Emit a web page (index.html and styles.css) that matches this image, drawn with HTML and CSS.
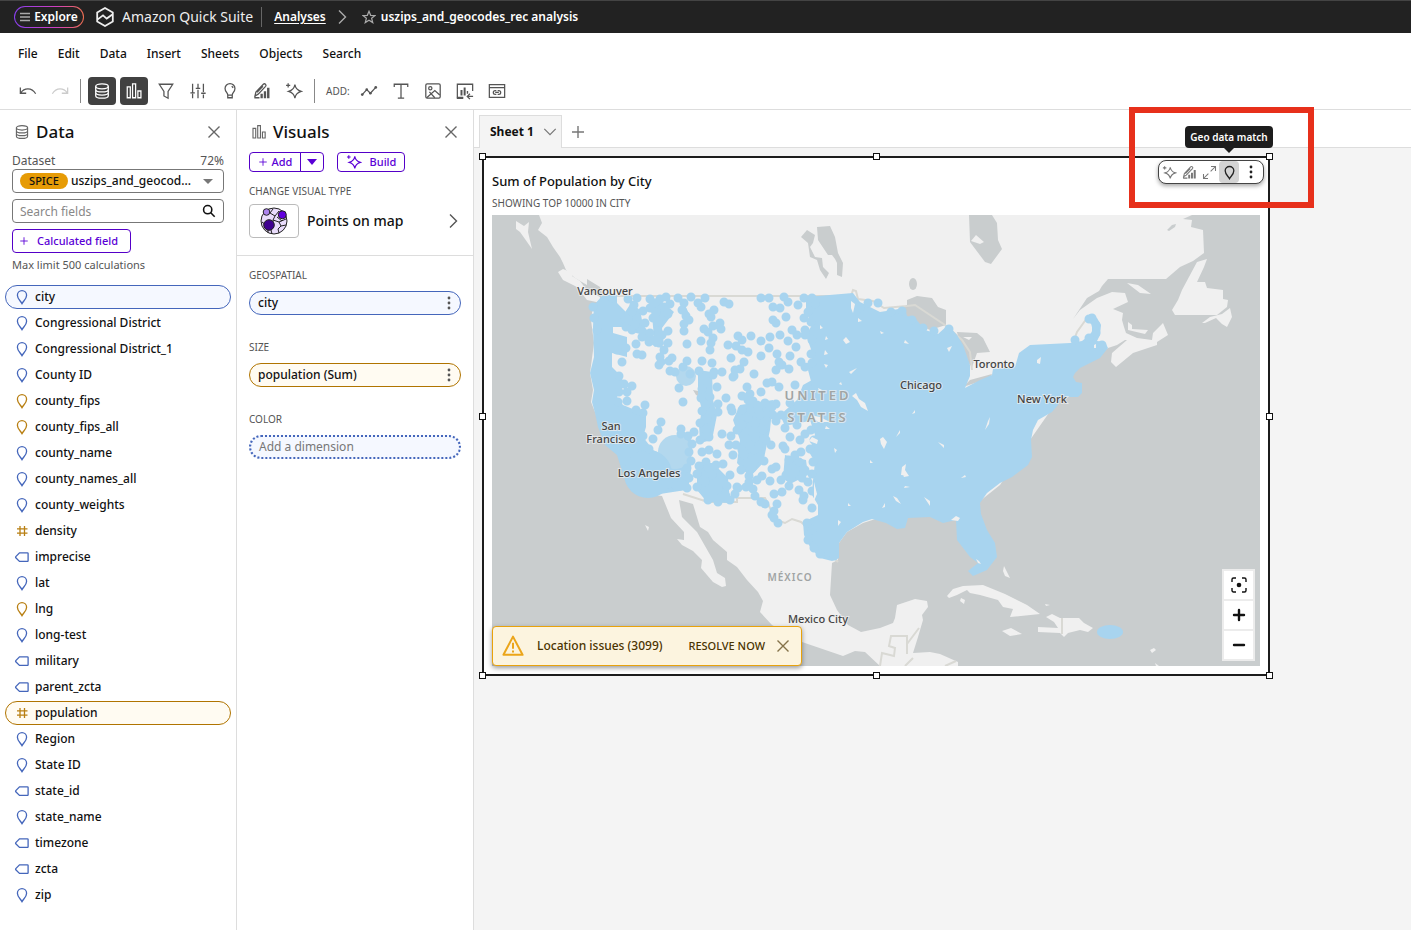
FILE: index.html
```html
<!DOCTYPE html>
<html lang="en">
<head>
<meta charset="utf-8">
<meta name="viewport" content="width=device-width, initial-scale=1">
<title>uszips_and_geocodes_rec analysis</title>
<link rel="stylesheet" href="styles.css">
</head>
<body>
<svg class="sprite" aria-hidden="true">
  <symbol id="pin" viewBox="0 0 16 16"><path d="M8 14.6C6.6 11.9 3.4 10 3.4 6.2a4.6 4.6 0 0 1 9.2 0c0 3.8-3.2 5.7-4.6 8.4z"/></symbol>
  <symbol id="tag" viewBox="0 0 16 16"><path d="M5.5 3.8h8a.6.6 0 0 1 .6.6v7.4a.6.6 0 0 1-.6.6h-8L1.8 8.8a1 1 0 0 1 0-1.2z"/></symbol>
  <symbol id="hash" viewBox="0 0 16 16"><path d="M6 3v10M10.5 3v10M3 5.8h10.5M3 10.2h10.5"/></symbol>
  <symbol id="close" viewBox="0 0 16 16"><path d="M2.5 2.5l11 11M13.5 2.5l-11 11"/></symbol>
  <symbol id="plus" viewBox="0 0 16 16"><path d="M8 2v12M2 8h12"/></symbol>
  <symbol id="db" viewBox="0 0 20 20"><ellipse cx="10" cy="4.8" rx="7" ry="2.8"/><path d="M3 4.8v10.4c0 1.6 3.1 2.8 7 2.8s7-1.2 7-2.8V4.8M3 8.3c0 1.6 3.1 2.8 7 2.8s7-1.2 7-2.8M3 11.8c0 1.6 3.1 2.8 7 2.8s7-1.2 7-2.8"/></symbol>
  <symbol id="bars" viewBox="0 0 20 20"><path d="M2.5 5.5h3.4v12H2.5zM8.4 2h3.4v15.500H8.400zM14.300 10h3.400v7.500h-3.400z"/></symbol>
  <symbol id="chartpen" viewBox="0 0 20 20"><path d="M2.200 15.500l1-4.300 8.300-8.700a1.700 1.700 0 0 1 2.500 2.300l-8.300 8.700zM2.200 15.500v2h5M4.500 11.500l6.500-6.800"/><path class="solid" d="M8.300 13h2.600v5H8.300zM12 10.200h2.600V18H12zM15.600 6.500h2.700V18h-2.700z"/></symbol>
  <symbol id="spark" viewBox="0 0 20 20"><path d="M11 3c.6 4 2.600 6.200 7 7.500-4.400 1.300-6.400 3.500-7 7.500-.6-4-2.600-6.200-7-7.500 4.400-1.300 6.400-3.500 7-7.500zM3.500 1.500v4.500M1.200 3.800h4.600"/></symbol>
  <symbol id="dots" viewBox="0 0 16 16"><g class="solid"><circle cx="8" cy="3" r="1.400"/><circle cx="8" cy="8" r="1.400"/><circle cx="8" cy="13" r="1.400"/></g></symbol>
  <symbol id="chev" viewBox="0 0 16 16"><path d="M5 1.500L11.500 8 5 14.500"/></symbol>
</svg>

<header class="topbar">
  <button class="explore"><svg class="ic10" viewBox="0 0 10 10"><path d="M0 1.500h10M0 5h10M0 8.500h10"/></svg>Explore</button>
  <a class="brand" href="#"><svg viewBox="0 0 20 20"><path d="M10 1l7.800 4.500v9L10 19l-7.800-4.500v-9zM2.400 12.600l5.600-4.300 3.700 3.300 6-4.400"/></svg>Amazon Quick Suite</a>
  <nav class="crumbs" aria-label="Breadcrumb">
    <a href="#">Analyses</a>
    <svg class="ic16 crumb-sep"><use href="#chev"/></svg>
    <button class="star" aria-label="Favorite"><svg viewBox="0 0 16 16"><path d="M8 1.500l1.900 4.600 4.900.3-3.800 3.100 1.300 4.900L8 11.700l-4.300 2.700L5 9.500 1.200 6.400l4.900-.3z"/></svg></button>
    <h1>uszips_and_geocodes_rec analysis</h1>
  </nav>
</header>

<nav class="menus" aria-label="Main menu">
  <button>File</button><button>Edit</button><button>Data</button><button>Insert</button><button>Sheets</button><button>Objects</button><button>Search</button>
</nav>

<div class="tools" role="toolbar" aria-label="Tools">
  <button aria-label="Undo"><svg viewBox="0 0 20 20"><path d="M1.500 6v6.500H8M2 12c3.500-5.500 12-6.500 16.500 1"/></svg></button>
  <button class="faint" aria-label="Redo"><svg viewBox="0 0 20 20"><path d="M18.500 6v6.500H12M18 12C14.500 6.500 6 5.500 1.500 13"/></svg></button>
  <span class="rule"></span>
  <button class="on" aria-label="Data"><svg><use href="#db"/></svg></button>
  <button class="on" aria-label="Visuals"><svg><use href="#bars"/></svg></button>
  <button aria-label="Filter"><svg viewBox="0 0 20 20"><path d="M2.500 2.500h15l-5.200 8v7.500l-4.600-2.500v-5z"/></svg></button>
  <button aria-label="Parameters"><svg viewBox="0 0 20 20"><path d="M4 2v8M4 13v5M10 2v3.500M10 8.500V18M16 2v9M16 14v4M1.500 12h5M7.500 7h5M13.500 12.500h5M4 10v2M10 5.500V7"/></svg></button>
  <button aria-label="Insights"><svg viewBox="0 0 20 20"><path d="M7.500 14.500C7.500 12 4.500 11 4.500 7.300a5.500 5.500 0 0 1 11 0c0 3.700-3 4.700-3 7.200zM7.500 14.500v3h5v-3M12 4.500l1.500 2"/></svg></button>
  <button aria-label="Themes"><svg><use href="#chartpen"/></svg></button>
  <button aria-label="Build with AI"><svg><use href="#spark"/></svg></button>
  <span class="rule"></span>
  <span class="tools-label">ADD:</span>
  <button aria-label="Add visual"><svg viewBox="0 0 20 20"><path d="M2.500 14l5-5.500 4 4L17.500 6"/><g class="solid"><circle cx="2.500" cy="14" r="1.500"/><circle cx="7.500" cy="8.500" r="1.500"/><circle cx="11.500" cy="12.500" r="1.500"/><circle cx="17.500" cy="6" r="1.500"/></g></svg></button>
  <button aria-label="Add text"><svg viewBox="0 0 20 20"><path d="M2.500 5.500v-3h15v3M10 2.500V18M6.500 18h7"/></svg></button>
  <button aria-label="Add image"><svg viewBox="0 0 20 20"><rect x="2" y="2" width="16" height="16" rx="1.500"/><circle cx="7" cy="7" r="1.800"/><path d="M3 17.500l9-8 5.500 5M6 11l6 6.500"/></svg></button>
  <button aria-label="Add chart reference"><svg viewBox="0 0 20 20"><path d="M8 17.500H1.500V2.500h17V10M19 16h-6M15.500 13l-3 3 3 3"/><path class="solid" d="M5 9h2.200v6H5zM8.500 6h2.200v9H8.500zM12 10h1.500v3H12zM1 16.500h7V19H1z"/></svg></button>
  <button aria-label="Add web content"><svg viewBox="0 0 20 20"><path d="M1.500 3h17v14h-17zM1.500 6.200h17M9.300 9.500H8a2 2 0 0 0 0 4.200h1.300M10.700 9.500H12a2 2 0 0 1 0 4.200h-1.300M8 11.600h4"/></svg></button>
</div>

<main class="work">
  <section class="panel" aria-labelledby="data-h">
    <div class="panel-head"><svg class="ic16"><use href="#db"/></svg><h2 id="data-h">Data</h2><button class="x" aria-label="Close data panel"><svg class="ic16"><use href="#close"/></svg></button></div>
    <div class="controls">
      <div class="label-row"><label for="ds">Dataset</label><span>72%</span></div>
      <div class="select-box"><span class="spice">SPICE</span><select id="ds"><option>uszips_and_geocod...</option></select></div>
      <div class="search-box"><input id="q" type="text" placeholder="Search fields" aria-label="Search fields"><svg viewBox="0 0 16 16"><circle cx="6.500" cy="6.500" r="4.700"/><path d="M10 10l4.500 4.500"/></svg></div>
      <button class="btn calc"><svg class="ic10"><use href="#plus"/></svg>Calculated field</button>
      <p class="hint">Max limit 500 calculations</p>
    </div>
    <ul class="fields">
      <li><button class="blue sel"><svg><use href="#pin"/></svg>city</button></li>
      <li><button class="blue"><svg><use href="#pin"/></svg>Congressional District</button></li>
      <li><button class="blue"><svg><use href="#pin"/></svg>Congressional District_1</button></li>
      <li><button class="blue"><svg><use href="#pin"/></svg>County ID</button></li>
      <li><button class="gold"><svg><use href="#pin"/></svg>county_fips</button></li>
      <li><button class="gold"><svg><use href="#pin"/></svg>county_fips_all</button></li>
      <li><button class="blue"><svg><use href="#pin"/></svg>county_name</button></li>
      <li><button class="blue"><svg><use href="#pin"/></svg>county_names_all</button></li>
      <li><button class="blue"><svg><use href="#pin"/></svg>county_weights</button></li>
      <li><button class="gold"><svg><use href="#hash"/></svg>density</button></li>
      <li><button class="blue"><svg><use href="#tag"/></svg>imprecise</button></li>
      <li><button class="blue"><svg><use href="#pin"/></svg>lat</button></li>
      <li><button class="gold"><svg><use href="#pin"/></svg>lng</button></li>
      <li><button class="blue"><svg><use href="#pin"/></svg>long-test</button></li>
      <li><button class="blue"><svg><use href="#tag"/></svg>military</button></li>
      <li><button class="blue"><svg><use href="#tag"/></svg>parent_zcta</button></li>
      <li><button class="gold sel"><svg><use href="#hash"/></svg>population</button></li>
      <li><button class="blue"><svg><use href="#pin"/></svg>Region</button></li>
      <li><button class="blue"><svg><use href="#pin"/></svg>State ID</button></li>
      <li><button class="blue"><svg><use href="#tag"/></svg>state_id</button></li>
      <li><button class="blue"><svg><use href="#pin"/></svg>state_name</button></li>
      <li><button class="blue"><svg><use href="#tag"/></svg>timezone</button></li>
      <li><button class="blue"><svg><use href="#tag"/></svg>zcta</button></li>
      <li><button class="blue"><svg><use href="#pin"/></svg>zip</button></li>
    </ul>
  </section>

  <section class="panel" aria-labelledby="vis-h">
    <div class="panel-head"><svg class="ic16"><use href="#bars"/></svg><h2 id="vis-h">Visuals</h2><button class="x" aria-label="Close visuals panel"><svg class="ic16"><use href="#close"/></svg></button></div>
    <div class="vis-top">
      <div class="btn-row">
        <div class="split"><button class="btn"><svg class="ic10"><use href="#plus"/></svg>Add</button><button class="btn" aria-label="More add options"><span class="caret"></span></button></div>
        <button class="btn build"><svg class="ic16"><use href="#spark"/></svg>Build</button>
      </div>
      <h3>CHANGE VISUAL TYPE</h3>
      <button class="vtype">
        <span class="thumb"><svg viewBox="0 0 28 28"><circle class="globe" cx="14" cy="14" r="13"/><path d="M6 4l4 2 3-4M10 6l5 3 4-5M15 9l-2 4 6 2 7-3M19 15l2 4 5-1M21 19l-3 3 1 4M9 14l5 0M2 15l4 3M14 20l-3 3 1 4M17 10l5 4M4 20l4 3 0 3"/><circle class="p1" cx="6.500" cy="5" r="3.300"/><circle class="p2" cx="22.300" cy="7.800" r="4"/><circle class="p3" cx="9" cy="18" r="5.300"/></svg></span>
        <span class="vname">Points on map</span><svg class="ic16"><use href="#chev"/></svg>
      </button>
    </div>
    <div class="wells">
      <div class="well"><h3>GEOSPATIAL</h3><button class="pill blue">city<svg class="ic16"><use href="#dots"/></svg></button></div>
      <div class="well"><h3>SIZE</h3><button class="pill gold">population (Sum)<svg class="ic16"><use href="#dots"/></svg></button></div>
      <div class="well"><h3>COLOR</h3><button class="pill empty">Add a dimension</button></div>
    </div>
  </section>

  <section class="canvas" aria-label="Sheet">
    <div class="tabs"><button class="tab">Sheet 1<svg viewBox="0 0 16 16"><path d="M1.500 4.500L8 11l6.500-6.500"/></svg></button><button class="newtab" aria-label="Add sheet"><svg class="ic16"><use href="#plus"/></svg></button></div>
    <article class="card">
      <h2>Sum of Population by City</h2>
      <p>SHOWING TOP 10000 IN CITY</p>
      <div class="map">
        <svg viewBox="492 215 768 451" role="img" aria-label="Map of population by city">
          <path class="land" d="M539 215L542 223 538 230 547 237 553 247 560 257 563 263 566 270 575 278 587 285 587 279 600 287 604 296 600 303 593 306 591 320 594 343 590 373 593 390 591 402 597 417 605 443 617 453 625 473 637 493 662 496 671 518 684 532 684 540 677 539 682 545 693 551 702 560 701 568 713 582 722 587 726 586 725 578 717 573 713 560 697 532 682 517 679 500 693 504 700 527 708 532 713 540 727 552 727 560 737 567 747 580 758 592 763 601 760 612 772 625 802 642 843 656 855 651 865 652 880 666 958 666 958 662 940 654 930 652 913 653 918 637 923 620 922 615 928 607 927 601 915 599 897 605 895 618 893 623 880 628 861 632 848 625 837 610 830 595 832 563 838 560 839 543 847 532 863 523 888 515 943 515 975 505 1000 485 1030 440 1060 397 1075 370 1108 348 1117 345 1125 340 1127 340 1112 353 1111 362 1116 367 1133 353 1157 345 1157 342 1168 335 1163 323 1153 333 1152 340 1137 338 1126 333 1124 327 1122 320 1123 313 1113 309 1128 302 1125 293 1112 292 1097 298 1080 310 1073 319 1087 298 1099 291 1102 286 1108 279 1166 279 1180 267 1193 261 1204 253 1203 230 1191 227 1192 220 1183 219 1192 215z"/>
          <path class="land" d="M516 221L524 226 529 222 528 232 532 249 525 239 520 232 516 229zM558 272L563 269 573 273 572 276 580 281 586 289 600 297 601 303 587 300 577 287 563 280zM1207 259L1197 262 1182 290 1178 300 1172 310 1175 315 1217 315 1227 307 1228 300 1223 299 1223 290 1207 288 1205 282 1197 282 1204 267zM1202 323L1210 317 1222 314 1230 308 1232 317 1227 327 1222 324 1216 318 1205 323zM1127 283L1138 285 1151 294 1140 293zM1128 322L1132 325 1132 329 1148 330 1145 334 1128 330z"/>
          <path class="land" d="M947 596L953 589 963 586 983 585 1005 594 1027 605 1040 614 1010 617 1013 609 1003 607 998 600 980 595 970 593 967 590 957 595 949 598zM961 598l4 2-1 4-4-3zM1003 571l1-5 2 4 4 8-5-2zM1046 617L1052 614 1060 618 1079 618 1084 623 1093 628 1088 632 1080 630 1068 633 1064 637 1060 633 1038 632 1038 627 1058 628 1054 622zM1002 631L1011 628 1022 634 1010 636zM1150 650l4-2 2 2-4 3zM1155 663l4 3h-3zM645 525l4 2-1 4zM1045 604l5 1-4 1z"/>
          <path class="water" d="M817 227L830 226 835 237 838 253 843 263 842 277 837 275 837 263 835 259 832 255 828 255 818 240zM801 237L807 230 815 235 813 243 810 247 815 257 822 258 823 267 829 273 826 279 820 270 817 260 810 257 808 243zM969 215L992 215 997 223 998 240 1002 249 991 264 985 262 970 242zM1167 230l5-5 4-1-1 3-6 4zM883 323L897 310 907 305 907 300 917 296 932 298 938 307 946 310 946 325 930 330 912 322 897 330zM943 333L930 343 928 353 926 360 933 350 940 344zM957 332L977 333 983 338 990 352 977 353 972 367 963 357zM963 387L970 380 992 374 990 378 975 383zM693 390l5 1v5l-2-1z"/>
          <ellipse class="water" cx="913" cy="284" rx="4" ry="6"/>
          <path class="land" d="M971 241l5-6 8 7-4 2zM963 337l9 0-3 3z"/>
          <path class="border" d="M601 296H851L853 290 856 291 858 299 873 301 884 308 907 306 915 305 945 325 962 340 970 352 972 370M1073 343L1077 332 1087 318M683 494L708 502H737V498H765L776 520 785 523 792 519 801 522 810 530 838 562M880 666L882 653 894 656 895 648 889 646 891 636H907V654M907 644L919 628M905 666L913 658M945 666L956 661M1062 618v16"/>
          <path class="data" d="M602 296L617 295 617 303 627 313 622 327 613 327 613 333 627 337 627 357 612 353 612 367 622 377 623 387 617 397 623 405 640 412 646 416 646 427 643 437 653 450 670 458 677 473 686 490 660 494 632 492 624 477 617 455 605 445 598 427 595 413 592 402 594 390 590 373 594 357 593 327 594 305z"/>
          <path class="data" d="M631 303L640 310 643 325 655 340 662 345 655 347 640 334 625 330 620 320zM648 298L666 305 674 312 662 328 664 345 654 338 652 315zM684 303L692 320 684 328zM698 370L712 372 713 400 717 415 712 440 700 443 699 425 702 410 698 395zM664 445L690 437 691 470 688 490 672 490zM697 463L713 463 728 478 730 503 707 502 697 490zM740 405L773 400 770 430 763 463 750 477 737 463 740 440 733 420zM785 455L806 460 808 475 790 484 783 478zM803 385L812 380 814 420 785 426 780 415 797 400z"/>
          <path class="data" d="M806 297L853 293 860 302 880 312 905 308 907 316 915 318 925 330 938 334 948 325 957 335 963 345 970 365 970 376 965 388 980 380 992 375 993 369 1015 367 1019 353 1030 345 1070 343 1082 341 1087 337 1092 332 1092 325 1087 320 1092 314 1097 318 1101 325 1100 335 1097 341 1105 342 1108 348 1100 358 1080 368 1075 373 1073 377 1076 382 1082 383 1082 393 1078 397 1060 397 1058 405 1052 412 1038 420 1033 430 1031 440 1032 457 1028 465 1012 477 1000 483 987 493 980 503 981 514 987 530 995 543 997 557 987 570 973 576 968 571 978 563 970 557 957 540 956 520 943 523 930 517 908 518 905 528 897 529 886 523 872 519 863 522 847 532 839 543 839 558 832 561 820 558 810 547 804 535 803 522 818 515 818 505 812 495 813 480 815 462 809 452 815 435 810 420 808 400 812 385 808 370 813 355 806 335 812 325 806 312z"/>
          <circle class="data soft" cx="675" cy="452" r="17"/><circle class="data" cx="648" cy="474" r="24"/><circle class="data soft" cx="686" cy="376" r="10"/>
          <path class="scatter" d="M593 307h0M594 318h0M597 330h0M612 298h0M626 348h0M622 362h0M617 350h0M628 299h0M637 298h0M634 305h0M632 312h0M643 311h0M628 320h0M635 325h0M626 327h0M632 330h0M645 323h0M650 299h0M655 303h0M660 299h0M666 297h0M650 308h0M656 313h0M664 307h0M670 304h0M668 314h0M658 322h0M653 318h0M650 333h0M662 335h0M668 331h0M678 298h0M684 303h0M691 297h0M698 303h0M705 298h0M682 310h0M686 316h0M689 320h0M684 324h0M684 331h0M701 307h0M709 314h0M714 310h0M711 317h0M720 323h0M713 326h0M704 329h0M708 332h0M721 329h0M724 302h0M729 304h0M642 337h0M649 342h0M655 340h0M636 344h0M659 343h0M668 343h0M664 350h0M637 354h0M642 355h0M660 357h0M672 358h0M659 365h0M669 361h0M687 344h0M701 341h0M711 343h0M713 338h0M710 350h0M687 361h0M702 361h0M712 363h0M683 367h0M675 372h0M670 371h0M661 362h0M690 374h0M699 371h0M714 372h0M722 372h0M717 387h0M713 375h0M679 388h0M683 402h0M619 376h0M624 384h0M632 386h0M627 392h0M627 401h0M619 392h0M618 402h0M645 405h0M661 422h0M658 430h0M681 429h0M653 439h0M643 436h0M649 449h0M643 413h0M636 410h0M681 434h0M688 436h0M694 432h0M700 423h0M702 411h0M701 398h0M702 389h0M710 397h0M706 405h0M718 404h0M726 398h0M731 408h0M718 412h0M707 419h0M706 430h0M709 437h0M722 434h0M692 444h0M700 440h0M689 452h0M691 461h0M702 452h0M717 454h0M709 450h0M687 468h0M689 478h0M680 486h0M687 488h0M676 486h0M668 484h0M662 480h0M699 466h0M706 462h0M697 474h0M708 468h0M716 465h0M723 464h0M730 475h0M712 475h0M705 482h0M722 482h0M718 489h0M726 496h0M713 496h0M708 500h0M730 500h0M718 502h0M735 494h0M738 488h0M697 487h0M720 498h0M727 486h0M738 336h0M736 346h0M728 345h0M735 370h0M733 377h0M742 340h0M751 336h0M742 350h0M748 352h0M731 358h0M744 362h0M734 376h0M740 369h0M754 374h0M747 387h0M742 396h0M750 394h0M761 392h0M732 411h0M742 410h0M748 418h0M757 405h0M765 403h0M772 407h0M761 298h0M769 298h0M784 297h0M788 302h0M773 307h0M780 308h0M773 320h0M776 323h0M786 317h0M798 305h0M804 298h0M812 298h0M808 312h0M804 318h0M811 322h0M805 330h0M761 341h0M770 337h0M780 335h0M792 330h0M788 341h0M797 335h0M805 335h0M812 340h0M796 347h0M811 354h0M761 356h0M769 348h0M777 354h0M779 362h0M790 356h0M782 365h0M789 369h0M776 370h0M801 362h0M805 367h0M812 363h0M767 383h0M772 382h0M779 387h0M795 385h0M776 404h0M773 415h0M776 421h0M760 415h0M755 424h0M763 430h0M766 440h0M752 432h0M742 425h0M737 430h0M731 436h0M736 445h0M742 450h0M733 455h0M729 445h0M748 400h0M753 401h0M758 410h0M750 446h0M755 438h0M754 450h0M755 460h0M747 463h0M741 470h0M749 476h0M737 487h0M744 455h0M758 448h0M760 457h0M752 468h0M764 461h0M771 445h0M757 480h0M762 476h0M770 481h0M749 482h0M753 489h0M746 487h0M755 496h0M761 502h0M765 504h0M772 469h0M776 467h0M785 449h0M790 437h0M783 446h0M789 460h0M795 455h0M801 452h0M810 449h0M799 462h0M805 470h0M795 472h0M786 475h0M781 480h0M774 494h0M782 492h0M791 478h0M789 486h0M802 478h0M799 490h0M808 482h0M804 496h0M812 474h0M812 491h0M812 508h0M777 504h0M774 511h0M774 518h0M778 523h0M772 515h0M803 500h0M813 462h0M814 440h0M805 434h0M800 440h0M811 430h0M797 425h0M785 428h0M793 413h0M803 408h0M790 403h0M812 417h0M781 415h0M807 523h0M812 530h0M808 540h0M814 548h0M820 554h0M834 556h0M815 304h0M807 395h0M868 303h0M860 308h0M878 303h0M891 312h0M902 311h0M912 320h0M923 328h0M934 331h0M949 329h0M1075 340h0M1089 319h0M1092 318h0M1096 325h0M1096 333h0M1089 338h0M1102 345h0"/>
          <ellipse class="data" cx="1110" cy="632" rx="13" ry="7"/>
          <path class="land" d="M843 340l3-3 4 5-4 2zM852 396l4-3 3 6 6 4 3 8-7-4-4-7zM880 439l3-2 4 5-3 7-3-5zM902 467l4-3-1 6 4 6-8-1zM893 496l4 2 4 6-5-3zM924 497l6 4 0 5zM947 348l5-2-3 6zM1037 360l4-3-1 7-3-1zM951 520l5-4 4 2-2 3zM812 437l6 3-1 4-8-3zM834 448l3 2-2 3zM851 301l4 3-2 9-2-5zM826 336l2 3-3 1zM938 442l6 3 0 3zM1094 345l2-1 0 4-2 0zM976 559l3 2 2 3-3-1zM814 482l3 12-3 7zM810 415l10 2 10 5-12 0zM824 364l4 1-2 3zM990 417l-1 7-4 6 3-9zM900 430l-4 7 4-4zM849 372l8-4-6 6zM838 520l3 2-3 4zM885 503l-3 5 3-1zM903 475l6 1-5 1zM905 486l5 1-6 1zM880 331l4 2-3 1zM905 340l4 4-5-1zM870 460l3 3-3 0zM848 503l3 3-3 0zM915 410l-3 4 3-1zM965 475l-4 3 5-1zM841 382l1 3-3-1zM858 318l4 3-4 1zM825 350l3 4-4 1zM820 325l3 3-3 1zM818 388l4 2-3 1zM826 426l4 3-5 0z"/>
          <g class="places">
            <text x="605" y="295">Vancouver</text><text x="611" y="430">San</text><text x="611" y="443">Francisco</text><text x="649" y="477">Los Angeles</text>
            <text x="921" y="389">Chicago</text><text x="994" y="368">Toronto</text><text x="1042" y="403">New York</text><text x="818" y="623">Mexico City</text>
          </g>
          <g class="country"><text x="818" y="400">UNITED</text><text x="818" y="422">STATES</text><text class="mx" x="790" y="581">MÉXICO</text></g>
        </svg>
        <div class="zoom"><button aria-label="Fit to data"><svg viewBox="0 0 16 16"><path d="M1 5V2.500A1.500 1.500 0 0 1 2.500 1H5M11 1h2.500A1.500 1.500 0 0 1 15 2.500V5M15 11v2.500a1.500 1.500 0 0 1-1.500 1.500H11M5 15H2.500A1.500 1.500 0 0 1 1 13.500V11"/><circle class="solid" cx="8" cy="8" r="2.300"/></svg></button><button aria-label="Zoom in"><svg class="thick" viewBox="0 0 16 16"><path d="M8 3v10M3 8h10"/></svg></button><button aria-label="Zoom out"><svg class="thick" viewBox="0 0 16 16"><path d="M3 8h10"/></svg></button></div>
        <div class="alert" role="status"><svg class="warn" viewBox="0 0 20 20"><path d="M10 1.500L18.700 18H1.300zM10 7v5.500M10 14v2"/></svg><span>Location issues (3099)</span><button class="resolve">RESOLVE NOW</button><button class="x" aria-label="Dismiss"><svg class="ic16"><use href="#close"/></svg></button></div>
      </div>
      <i class="h nw"></i><i class="h n"></i><i class="h ne"></i><i class="h w"></i><i class="h e"></i><i class="h sw"></i><i class="h s"></i><i class="h se"></i>
      <div class="floatbar" role="toolbar" aria-label="Visual actions">
        <button aria-label="Edit with AI"><svg><use href="#spark"/></svg></button><button aria-label="Format visual"><svg><use href="#chartpen"/></svg></button><button aria-label="Maximize"><svg viewBox="0 0 20 20"><path d="M12 2h6v6M18 2l-6.500 6.500M8 18H2v-6M2 18l6.500-6.500"/></svg></button><button class="active" aria-label="Geo data match" aria-describedby="tip"><svg class="ic16"><use href="#pin"/></svg><span class="tip" id="tip" role="tooltip">Geo data match</span></button><button class="more" aria-label="More"><svg class="ic16"><use href="#dots"/></svg></button>
      </div>
      <div class="callout"></div>
    </article>
  </section>
</main>
</body>
</html>
```

FILE: styles.css
```css
* { box-sizing: border-box; }
body { margin: 0; min-height: 100vh; display: flex; flex-direction: column; background: #fff; color: #111; font: 500 12px/16px "Noto Sans", "Open Sans", sans-serif; }
button, input, select { font: inherit; color: inherit; }
button { background: none; border: 0; padding: 0; display: inline-flex; align-items: center; justify-content: center; cursor: pointer; }
h1, h2, h3, p, ul { margin: 0; padding: 0; }
svg { fill: none; stroke: currentColor; stroke-width: 1.4; flex: none; }
.solid { fill: currentColor; stroke: none; }
.sprite { position: absolute; width: 0; height: 0; }
.ic16 { width: 16px; height: 16px; }
.ic10 { width: 10px; height: 10px; }

.topbar { display: flex; align-items: center; height: 33px; padding-left: 14px; background: #222; border-top: 1px solid #444; color: #fff; }
.explore { height: 22px; width: 70px; gap: 4px; border: 1px solid transparent; border-radius: 11px; background: linear-gradient(#222, #222) padding-box, linear-gradient(90deg, #8a3ff0, #d03fc0 60%, #f07050) border-box; font-weight: 600; }
.explore svg { color: #aaa; }
.brand { display: flex; align-items: center; gap: 7px; margin-left: 11px; padding-right: 8px; border-right: 1px solid #666; color: #eee; text-decoration: none; font-size: 14px; line-height: 20px; font-weight: 400; }
.brand svg { width: 20px; height: 20px; stroke-width: 1.8; }
.crumbs { display: flex; align-items: center; padding-left: 12px; }
.crumbs a { color: #fff; font-weight: 600; font-size: 12px; text-underline-offset: 2px; }
.crumb-sep { margin: 0 12px 0 8px; color: #aaa; }
.star svg { width: 14px; height: 14px; color: #aaa; }
.crumbs h1 { margin-left: 5px; font-size: 12px; line-height: 16px; font-weight: 600; }

.menus { display: flex; gap: 20px; height: 41px; padding-left: 18px; align-items: center; }
.tools { display: flex; align-items: center; gap: 4px; height: 36px; padding: 0 0 2px 14px; border-bottom: 1px solid #ddd; color: #555; }
.tools button { width: 28px; height: 28px; border-radius: 4px; }
.tools svg { width: 18px; height: 18px; }
.tools .on { background: #414141; color: #fff; }
.tools .faint { color: #ccc; }
.rule { width: 1px; height: 24px; margin: 0 3px 0 2px; background: #888; }
.tools-label { margin: 0 1px 0 4px; font-size: 10px; font-weight: 400; }

.work { display: flex; flex: 1; }
.panel { flex: 0 0 237px; border-right: 1px solid #ddd; }
.panel-head { display: flex; align-items: center; height: 44px; padding: 0 14px; gap: 6px; color: #666; }
.panel-head h2 { flex: 1; color: #111; font-size: 17px; line-height: 24px; font-weight: 500; }
.controls { display: grid; gap: 6px; padding: 0 12px; }
.label-row { display: flex; justify-content: space-between; height: 14px; line-height: 14px; margin-bottom: -5px; font-weight: 400; color: #555; }
.select-box, .search-box { position: relative; height: 24px; }
.select-box select, .search-box input { width: 100%; height: 100%; border: 1px solid #777; border-radius: 4px; background: #fff; outline: 0; }
.select-box select { appearance: none; padding: 0 28px 0 58px; font-weight: 500; }
.select-box::after { content: ""; position: absolute; right: 11px; top: 10px; border: 5px solid transparent; border-top-color: #777; border-bottom: 0; }
.spice { position: absolute; left: 8px; top: 4px; width: 48px; height: 16px; border-radius: 8px; background: #e69b06; font-size: 11px; text-align: center; }
.search-box input { padding: 0 30px 0 7px; font-weight: 400; }
.search-box input::placeholder { color: #888; opacity: 1; }
.search-box svg { position: absolute; right: 8px; top: 5px; width: 14px; height: 14px; stroke-width: 1.8; }
.btn { height: 20px; border: 1px solid #5500c8; border-radius: 4px; color: #5a00d6; gap: 7px; font-size: 11px; }
.calc { justify-self: start; justify-content: flex-start; height: 24px; width: 119px; padding-left: 6px; gap: 8px; }
.hint { padding: 0 0 12px; margin-top: -2px; font-size: 11px; line-height: 16px; font-weight: 400; color: #555; }
.fields { list-style: none; display: grid; gap: 2px; padding: 0 5px; }
.fields button { width: 100%; height: 24px; justify-content: flex-start; gap: 5px; padding: 0 8px; border: 1px solid transparent; border-radius: 12px; color: #111; }
.fields svg { width: 16px; height: 16px; stroke-width: 1.3; }
.blue svg { color: #4466bb; }
.gold svg { color: #b87f12; }
.fields .sel.blue, .pill.blue { background: #f5f8ff; border-color: #4466bb; }
.fields .sel.gold, .pill.gold { background: #fffbf2; border-color: #b07400; }

.vis-top { padding: 0 12px 16px; margin-top: -2px; border-bottom: 1px solid #ddd; }
.btn-row { display: flex; gap: 13px; }
.split { display: flex; }
.split .btn:first-child { width: 52px; border-radius: 4px 0 0 4px; gap: 4px; }
.split .btn:last-child { width: 24px; margin-left: -1px; border-radius: 0 4px 4px 0; }
.caret { border: 5px solid transparent; border-top: 6px solid; border-bottom: 0; }
.build { width: 68px; gap: 8px; }
h3 { font-size: 10px; line-height: 16px; font-weight: 400; color: #555; }
.vis-top h3 { margin: 11px 0 5px; }
.vtype { width: 100%; gap: 8px; }
.vtype > svg { color: #555; }
.thumb { width: 50px; height: 34px; display: grid; place-items: center; border: 1px solid #bbb; border-radius: 4px; }
.thumb svg { width: 28px; height: 28px; stroke-width: 1; color: #222; }
.globe { fill: #e9dcfb; }
.p1 { fill: #ad84ee; }
.p2 { fill: #6200dd; }
.p3 { fill: #3f0090; }
.vname { flex: 1; text-align: left; font-size: 14px; line-height: 20px; }
.wells { display: grid; gap: 24px; padding: 11px 12px; }
.well { display: grid; gap: 8px; }
.pill { height: 24px; width: 100%; justify-content: space-between; padding: 0 3px 0 8px; border: 1px solid; border-radius: 12px; }
.pill.blue svg, .pill.gold svg { color: #555; }
.pill.empty { border: 2px dotted #4466bb; background: #f5f8ff; color: #777; font-weight: 400; }

.canvas { flex: 1; min-width: 0; background: #f4f4f4; }
.tabs { display: flex; height: 38px; padding: 5px 0 0 5px; background: linear-gradient(#ddd, #ddd) bottom / 100% 1px no-repeat #fff; }
.tab { width: 83px; gap: 9px; justify-content: flex-start; padding-left: 10px; border: 1px solid #ddd; border-bottom: 0; background: #f4f4f4; font-weight: 700; }
.tab svg { width: 14px; height: 14px; color: #777; }
.newtab { width: 32px; color: #777; }
.card { position: relative; max-width: 788px; width: calc(100% - 16px); margin: 8px 8px 24px; padding: 13px 8px 8px; border: 2px solid #1c1c1c; background: #fff; }
.card h2 { font-size: 13px; line-height: 20px; font-weight: 500; }
.card p { margin: 4px 0; font-size: 10px; line-height: 16px; font-weight: 400; color: #555; }
.map { position: relative; }
.map > svg { display: block; width: 100%; height: auto; background: #c9cdce; stroke: none; }
.land { fill: #f0f0f0; }
.water { fill: #c9cdce; }
.border { stroke: #d9d9d4; stroke-width: 2; }
.data { fill: #a8d4ef; }
.soft { fill: #b3d8ee; }
.scatter { stroke: #a8d4ef; stroke-width: 9; stroke-linecap: round; }
.places, .country { text-anchor: middle; paint-order: stroke; stroke: #f0f0f0; stroke-opacity: .7; stroke-width: 2; font-size: 11px; }
.places { fill: #444; }
.country { fill: #a0a4a4; font-size: 13px; font-weight: 600; letter-spacing: 3px; }
.country .mx { font-size: 10px; letter-spacing: 1px; }
.zoom { position: absolute; right: 5px; bottom: 5px; display: grid; gap: 2px; padding: 2px; background: #ececec; }
.zoom button { width: 29px; height: 28px; background: #fff; }
.zoom svg { width: 16px; height: 16px; }
.zoom .thick { stroke-width: 2.4; stroke-linecap: round; }
.alert { position: absolute; left: 0; bottom: 0; display: flex; align-items: center; width: 310px; height: 40px; padding: 0 10px 0 9px; border: 1px solid #e8a20c; border-radius: 4px; background: #fcf4df; box-shadow: 0 2px 5px rgba(0, 0, 0, .4); color: #4a3300; }
.warn { width: 22px; height: 22px; margin-right: 13px; color: #eba51a; stroke-width: 1.8; stroke-linejoin: round; }
.alert .resolve { margin-left: auto; font-size: 11px; }
.alert .x { margin-left: 10px; color: #85724a; }
.h { position: absolute; width: 7px; height: 7px; border: 1px solid #111; background: #fff; }
.nw, .n, .ne { top: -5px; }
.sw, .s, .se { bottom: -5px; }
.nw, .w, .sw { left: -5px; }
.ne, .e, .se { right: -5px; }
.n, .s { left: calc(50% - 3px); }
.w, .e { top: calc(50% - 3px); }
.floatbar { position: absolute; right: 4px; top: 2px; display: flex; height: 24px; padding-right: 1px; border: 1px solid #444; border-radius: 8px; background: #fff; box-shadow: 0 2px 4px rgba(0, 0, 0, .35); color: #777; }
.floatbar button { position: relative; width: 20px; }
.floatbar svg { width: 15px; height: 15px; }
.floatbar .active { border-radius: 4px; background: #d4d4d4; color: #222; }
.floatbar .more { width: 23px; color: #222; }
.floatbar .more svg { width: 16px; height: 16px; }
.tip { position: absolute; left: 50%; bottom: 35px; width: 88px; margin-left: -44px; border-radius: 4px; background: #1d1d1d; color: #fff; font-size: 10px; line-height: 22px; font-weight: 600; text-align: center; }
.tip::after { content: ""; position: absolute; left: 39px; top: 22px; border: 5px solid transparent; border-top: 5px solid #1d1d1d; border-bottom: 0; }
.callout { position: absolute; right: -46px; top: -51px; width: 185px; height: 101px; border: 6px solid #e7301b; pointer-events: none; }
```
